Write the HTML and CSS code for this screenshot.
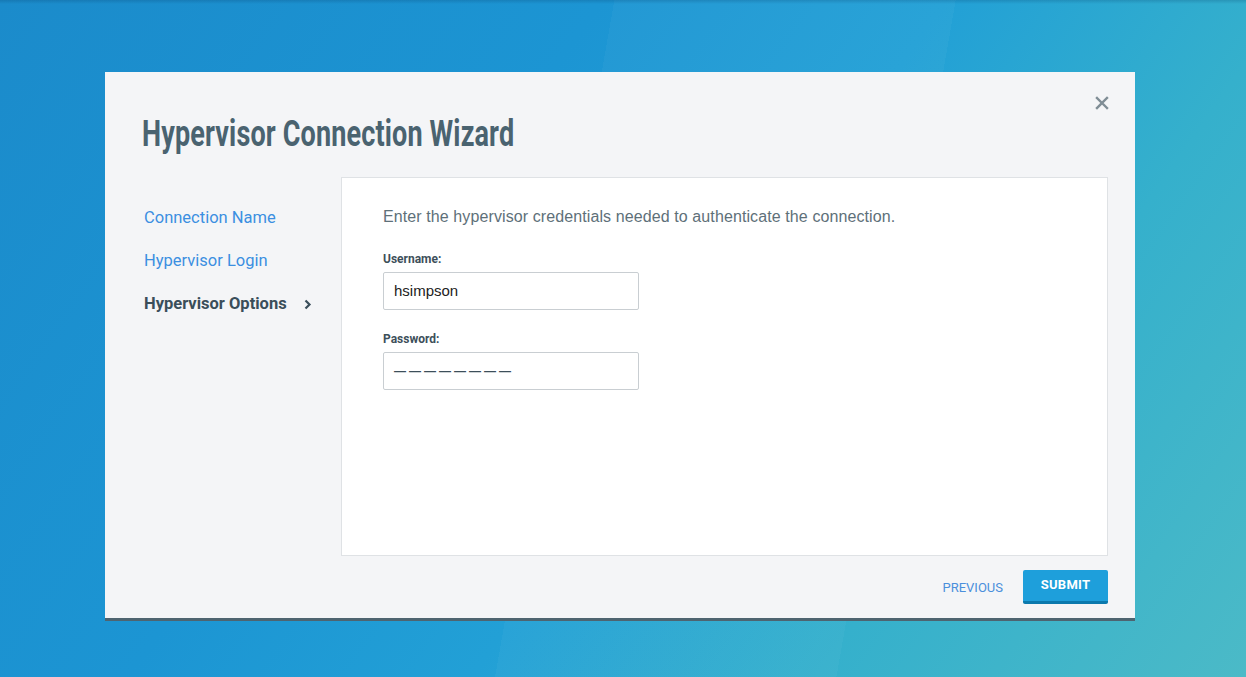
FILE: index.html
```html
<!DOCTYPE html>
<html lang="en">
<head>
<meta charset="utf-8">
<title>Hypervisor Connection Wizard</title>
<link rel="stylesheet" href="styles.css">
</head>
<body>
<div class="modal">
  <div class="modal-head">
    <h1 class="title"><span class="title-text">Hypervisor Connection Wizard</span></h1>
    <button class="close" aria-label="Close">
      <svg width="14" height="14" viewBox="0 0 14 14"><path d="M2 2 L12 12 M12 2 L2 12" stroke="#7f8d95" stroke-width="2.4" stroke-linecap="square"/></svg>
    </button>
  </div>
  <div class="modal-body">
    <nav class="steps">
      <a class="step">Connection Name</a>
      <a class="step">Hypervisor Login</a>
      <a class="step active">Hypervisor Options
        <svg class="chev" width="8" height="11" viewBox="0 0 8 11"><path d="M1.5 1.5 L5.5 5.5 L1.5 9.5" fill="none" stroke="#3a4e5a" stroke-width="2.2"/></svg>
      </a>
    </nav>
    <section class="panel">
      <p class="intro">Enter the hypervisor credentials needed to authenticate the connection.</p>
      <div class="field">
        <label class="label">Username:</label>
        <div class="control">hsimpson</div>
      </div>
      <div class="field">
        <label class="label">Password:</label>
        <div class="control pw">————————</div>
      </div>
    </section>
  </div>
  <div class="modal-foot">
    <button class="btn-link">PREVIOUS</button>
    <button class="btn-primary">SUBMIT</button>
  </div>
</div>
</body>
</html>
```

FILE: styles.css
```css
html, body {
  margin: 0;
  padding: 0;
  height: 100%;
}
body {
  width: 1246px;
  height: 677px;
  overflow: hidden;
  font-family: "Liberation Sans", Arial, sans-serif;
  background:
    linear-gradient(180deg, rgba(0,40,80,0.18) 0px, rgba(0,40,80,0) 4px),
    linear-gradient(100deg, rgba(255,255,255,0) 0%, rgba(255,255,255,0) 45%, rgba(255,255,255,0.03) 45%, rgba(255,255,255,0.03) 70%, rgba(255,255,255,0) 70%),
    linear-gradient(125deg, #1b8bcb 0%, #1c95d3 35%, #22a0d6 55%, #35b0cc 75%, #4bbac7 100%);
}
.modal {
  box-sizing: border-box;
  margin: 72px 0 0 105px;
  width: 1030px;
  height: 549px;
  background: #f4f5f7;
  border-bottom: 3px solid #4e6470;
  padding: 0 27px 0 37px;
  display: flex;
  flex-direction: column;
}
.modal-head {
  display: flex;
  justify-content: space-between;
  align-items: flex-start;
  height: 105px;
}
.title {
  margin: 38px 0 0 0;
  font-family: "Roboto", "DejaVu Sans Condensed", sans-serif;
  font-weight: 700;
  font-size: 36px;
  line-height: 48px;
  color: #4a6370;
  white-space: nowrap;
}
.title-text {
  display: inline-block;
  transform: scaleX(0.75);
  transform-origin: left center;
  letter-spacing: 0.2px;
}
.close {
  margin: 24px -1px 0 0;
  padding: 0;
  border: 0;
  background: none;
  width: 14px;
  height: 14px;
  line-height: 0;
}
.modal-body {
  display: flex;
  height: 379px;
}
.steps {
  width: 199px;
  flex: none;
  display: flex;
  flex-direction: column;
  padding-top: 30px;
  box-sizing: border-box;
}
.step {
  font-family: "Roboto", sans-serif;
  font-size: 16.5px;
  line-height: 22px;
  height: 43px;
  color: #3b8fe1;
  padding-left: 2px;
  display: flex;
  align-items: flex-start;
}
.step.active {
  color: #3a4e5a;
  font-weight: 700;
}
.chev {
  margin-left: 17px;
  margin-top: 6px;
}
.panel {
  flex: 1;
  background: #fff;
  border: 1px solid #dfe2e5;
  padding: 29px 41px 0 41px;
  box-sizing: border-box;
}
.intro {
  margin: 0 0 25px 0;
  font-size: 16px;
  letter-spacing: 0.1px;
  line-height: 20px;
  color: #5e7079;
}
.field {
  margin-bottom: 22px;
}
.label {
  display: block;
  font-family: "Roboto", sans-serif;
  font-weight: 700;
  font-size: 12px;
  line-height: 14px;
  color: #3d4f5a;
  margin-bottom: 6px;
}
.control {
  box-sizing: border-box;
  width: 256px;
  height: 38px;
  border: 1px solid #c9ced2;
  border-radius: 2px;
  background: #fff;
  padding: 0 10px;
  font-size: 15px;
  line-height: 36px;
  color: #222;
}
.control.pw {
  font-size: 12px;
  letter-spacing: 3px;
  color: #3d4f5a;
  padding-left: 10px;
  font-weight: 700;
}
.modal-foot {
  display: flex;
  justify-content: flex-end;
  align-items: flex-start;
  padding-top: 14px;
  gap: 20px;
}
.btn-link {
  border: 0;
  background: none;
  padding: 0;
  margin-top: 10px;
  font-family: "Roboto", sans-serif;
  font-size: 13px;
  line-height: 16px;
  color: #4a8fdc;
  letter-spacing: 0;
}
.btn-primary {
  box-sizing: border-box;
  width: 85px;
  height: 34px;
  border: 0;
  border-bottom: 3px solid #0b79ad;
  border-radius: 2px;
  background: #1e9fdb;
  color: #fff;
  font-family: "Roboto", sans-serif;
  font-weight: 700;
  font-size: 13px;
  letter-spacing: 0.3px;
  padding: 0 0 2px 0;
}
```
